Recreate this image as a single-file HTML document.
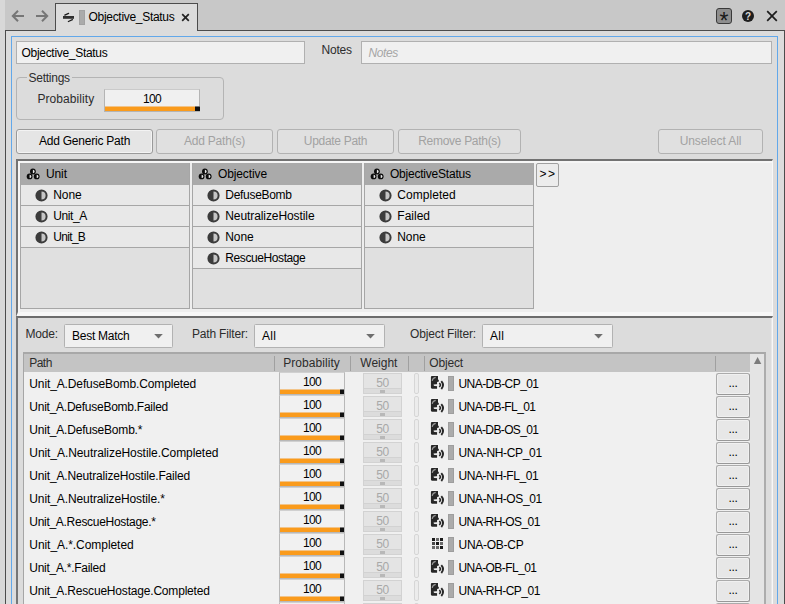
<!DOCTYPE html>
<html><head><meta charset="utf-8"><title>Objective_Status</title>
<style>
*{box-sizing:border-box;margin:0;padding:0}
html,body{width:785px;height:604px;overflow:hidden}
body{position:relative;background:#c8c8c8;font-family:"Liberation Sans",sans-serif;font-size:12px;color:#000;line-height:14px}
.a{position:absolute}
span,em{position:absolute;white-space:nowrap}
#lstrip{left:0;top:0;width:5px;height:604px;background:#d8d8d8}
#panel{left:5px;top:30px;width:780px;height:600px;background:#dcdcdc;border:1px solid #4c4c4c}
#tab{left:55px;top:3px;width:143px;height:28px;background:#dcdcdc;border:1px solid #4c4c4c;border-bottom:none}
#focus{left:11px;top:36px;width:767px;height:600px;border:1px solid #62a8ea}
.field{background:#f0f0f0;border:1px solid #b0b0b0}
.btn{border:1px solid #9a9a9a;border-radius:3px;background:#e5e5e5;height:25px;top:129px;text-align:center;box-shadow:inset 0 0 0 1px #f3f3f3}
.btn.dis{border-color:#b2b2b2;background:#e0e0e0;color:#a2a2a2;box-shadow:none}
.btn span{position:static;line-height:22px}
.lbl{color:#2c2c2c}
#tree{left:16px;top:159px;width:757px;border-right:1px solid #f8f8f8;height:158px;background:#eeeeee;border-top:2px solid #727272;border-left:2px solid #727272;border-bottom:5px solid #f7f7f7;box-shadow:inset 2px 2px 0 #f6f6f6}
.tcol{top:163px;height:146px;background:#e0e0e0;border:1px solid #a6a6a6;border-top:none}
.thead{left:0;top:0;right:0;height:22px;background:#aaaaaa}
.trow{left:0;right:0;height:21px;background:#e8e8e8;border-bottom:1px solid #a6a6a6}
#lower{left:16px;top:316px;width:757px;height:300px;background:#dcdcdc;border-top:2px solid #6c6c6c;border-left:2px solid #767676;border-right:1px solid #f8f8f8;box-shadow:inset -1px 0 0 #e8e8e8}
.combo{background:#f0f0f0;border:1px solid #b2b2b2;border-radius:1.5px;height:24px;top:324px}
.combo svg{position:absolute;right:9px;top:9px}
#tbl{left:23px;top:352px;width:743px;height:260px;background:#f0f0f0;border:1px solid #a6a6a6;border-top:2px solid #a8a8a8;border-right:2px solid #acacac;overflow:hidden}
#thead{left:24px;top:354px;width:726px;height:18px;background:#c4c4c4}
#thead u{position:absolute;top:2px;width:1px;height:15px;background:#a0a0a0}
#rows{position:absolute;left:0;top:352px;width:785px;height:260px;overflow:hidden}
.row{position:absolute;left:0;width:785px;height:23px}
.ps{position:absolute;left:279px;top:0;width:66px;height:23px;background:#f1f1f1;border:1px solid #b8b8b8;border-top-color:#d0d0d0}
.ps span{left:0;right:0;text-align:center;top:2px;letter-spacing:-0.7px}
.ps i{position:absolute;left:0;right:0;bottom:0;height:5px;background:#fa9b1c;border-top:1px solid #f2c489}
.ps b{position:absolute;right:0;bottom:0;width:4px;height:5px;background:#111;border-top:1px solid #777}
.ws{position:absolute;left:363px;top:1px;width:39px;height:21px;background:#e4e4e4;border:1px solid #d2d2d2}
.ws span{left:0;right:0;text-align:center;top:2px;color:#a8a8a8;letter-spacing:-0.4px}
.ws i{position:absolute;left:0;right:0;bottom:0;height:5px;background:#dcdcdc;border-top:1px solid #d2d2d2}
.ws b{position:absolute;left:16px;bottom:0;width:5px;height:3px;background:#b8b8b8}
.chk{position:absolute;left:414px;top:1px;width:5px;height:21px;border:1px solid #d6d6d6;border-radius:2px;background:#ececec}
.ic{position:absolute;left:430px;top:3px}
.col{position:absolute;left:448px;top:4px;width:6px;height:15px;background:#ababab;border:1px solid #9e9e9e}
.dots{position:absolute;left:716px;top:1px;width:34px;height:22px;border:1px solid #a2a2a2;border-color:#ababab #989898 #989898 #ababab;border-radius:2.5px;background:#e7e7e7;text-align:center;box-shadow:inset 0 0 0 1px #f0f0f0}
.dots span{left:0;right:0;top:1.5px;letter-spacing:-0.4px}
#vsb{left:750px;top:354px;width:14px;height:260px;background:#e4e4e4}

</style></head>
<body>
<div class="a" id="lstrip"></div>
<svg class="a" style="left:10px;top:8px" width="42" height="16" viewBox="0 0 42 16"><g fill="none" stroke="#767676" stroke-width="2"><path d="M14 8H3M8 2.8L2.8 8L8 13.2"/><path d="M26 8H37M32 2.8L37.2 8L32 13.2"/></g></svg>
<div class="a" id="panel"></div>
<div class="a" id="tab"></div>
<svg class="a" style="left:62px;top:12px" width="14" height="11" viewBox="0 0 14 11"><path d="M1 5.4H12" stroke="#303030" stroke-width="2.8" fill="none"/><path d="M2.8 3.1L6.6 1.4M10.4 7.7L6.4 9.5" stroke="#1c1c1c" stroke-width="1.3" stroke-linecap="round" fill="none"/></svg>
<div class="a" style="left:79px;top:10px;width:6px;height:15px;background:#ababab;border:1px solid #a2a2a2"></div>
<span style="left:88.5px;top:10px;letter-spacing:-0.3px;">Objective_Status</span>
<svg class="a" style="left:181px;top:13px" width="9" height="9" viewBox="0 0 9 9"><path d="M1.2 1.2L7.8 7.8M7.8 1.2L1.2 7.8" stroke="#222" stroke-width="1.7" fill="none"/></svg>
<div class="a" style="left:716px;top:8px;width:16px;height:16px;background:#8e8e8e;border:1px solid #3a3a3a;border-radius:3px"></div>
<span style="left:716px;width:16px;text-align:center;top:7.5px;font-size:23px;line-height:26px;color:#1a1a1a">*</span>
<div class="a" style="left:742px;top:10px;width:12px;height:12px;border-radius:6px;background:#1e1e1e"></div>
<span style="left:742px;width:12px;text-align:center;top:9.5px;font-size:10px;font-weight:bold;line-height:13px;color:#d8d8d8">?</span>
<svg class="a" style="left:766px;top:10px" width="12" height="12" viewBox="0 0 12 12"><path d="M1.2 1.2L10.8 10.8M10.8 1.2L1.2 10.8" stroke="#1c1c1c" stroke-width="1.7" fill="none"/></svg>
<div class="a" id="focus"></div>
<div class="a field" style="left:16px;top:41px;width:289px;height:23px"></div>
<span style="left:21.5px;top:46px;letter-spacing:-0.3px;">Objective_Status</span>
<span class="lbl" style="left:321.5px;top:43px;letter-spacing:-0.21px;">Notes</span>
<div class="a field" style="left:361px;top:41px;width:411px;height:23px"></div>
<em style="left:368.5px;top:45.5px;color:#a6a6a6;letter-spacing:-0.4px">Notes</em>
<div class="a" style="left:16px;top:77px;width:208px;height:43px;border:1px solid #b4b4b4;border-radius:4px"></div>
<div class="a" style="left:27px;top:72px;width:45px;height:12px;background:#dcdcdc"></div>
<span class="lbl" style="left:28.5px;top:70.5px;letter-spacing:-0.25px;">Settings</span>
<span class="lbl" style="left:37.5px;top:92px;letter-spacing:0.06px;">Probability</span>
<div class="a" style="left:104px;top:89px;width:96px;height:23px;background:#f0f0f0;border:1px solid #b4b4b4;border-top-color:#cacaca"></div>
<span style="left:104px;width:96px;text-align:center;top:92px;letter-spacing:-0.7px">100</span>
<div class="a" style="left:105px;top:106px;width:94px;height:5px;background:#fa9b1c;border-top:1px solid #f2c489"></div>
<div class="a" style="left:195px;top:106px;width:5px;height:5px;background:#111;border-top:1px solid #777"></div>
<div class="a btn" style="left:16px;width:137px"><span style="letter-spacing:-0.22px;">Add Generic Path</span></div>
<div class="a btn dis" style="left:156px;width:117px"><span style="letter-spacing:-0.2px;">Add Path(s)</span></div>
<div class="a btn dis" style="left:277px;width:117px"><span style="letter-spacing:-0.3px;">Update Path</span></div>
<div class="a btn dis" style="left:398px;width:123px"><span style="letter-spacing:-0.3px;">Remove Path(s)</span></div>
<div class="a btn dis" style="left:658px;width:105px"><span style="letter-spacing:-0.09px;">Unselect All</span></div>
<div class="a" id="tree"></div>
<div class="a tcol" style="left:20px;width:170px"><div class="a thead"><svg class="a" style="left:5px;top:5px" width="14" height="12" viewBox="0 0 14 12"><g fill="#0c0c0c"><circle cx="6.9" cy="3.5" r="2.9"/><circle cx="3.6" cy="8.4" r="2.9"/><circle cx="10.7" cy="8.4" r="2.9"/></g><g fill="#e6e6e6"><path d="M6.9 1.8A1.7 1.7 0 0 1 6.9 5.2Z"/><path d="M3.6 6.7A1.7 1.7 0 0 1 3.6 10.1Z"/><path d="M10.7 6.7A1.7 1.7 0 0 1 10.7 10.1Z"/></g></svg><span style="left:25px;top:3.5px;letter-spacing:-0.11px;">Unit</span></div><div class="a trow" style="top:22px"><svg class="a" style="left:13.5px;top:4px" width="13" height="13" viewBox="0 0 13 13"><circle cx="6.5" cy="6.5" r="5.1" fill="#c6c6c6" stroke="#3c3c3c" stroke-width="2"/><path d="M6.5 1.4A5.1 5.1 0 0 0 6.5 11.6Z" fill="#3c3c3c"/></svg><span style="left:32.3px;top:3px;letter-spacing:-0.1px;">None</span></div><div class="a trow" style="top:43px"><svg class="a" style="left:13.5px;top:4px" width="13" height="13" viewBox="0 0 13 13"><circle cx="6.5" cy="6.5" r="5.1" fill="#c6c6c6" stroke="#3c3c3c" stroke-width="2"/><path d="M6.5 1.4A5.1 5.1 0 0 0 6.5 11.6Z" fill="#3c3c3c"/></svg><span style="left:32.3px;top:3px;letter-spacing:-0.43px;">Unit_A</span></div><div class="a trow" style="top:64px"><svg class="a" style="left:13.5px;top:4px" width="13" height="13" viewBox="0 0 13 13"><circle cx="6.5" cy="6.5" r="5.1" fill="#c6c6c6" stroke="#3c3c3c" stroke-width="2"/><path d="M6.5 1.4A5.1 5.1 0 0 0 6.5 11.6Z" fill="#3c3c3c"/></svg><span style="left:32.3px;top:3px;letter-spacing:-0.69px;">Unit_B</span></div></div>
<div class="a tcol" style="left:192px;width:170px"><div class="a thead"><svg class="a" style="left:5px;top:5px" width="14" height="12" viewBox="0 0 14 12"><g fill="#0c0c0c"><circle cx="6.9" cy="3.5" r="2.9"/><circle cx="3.6" cy="8.4" r="2.9"/><circle cx="10.7" cy="8.4" r="2.9"/></g><g fill="#e6e6e6"><path d="M6.9 1.8A1.7 1.7 0 0 1 6.9 5.2Z"/><path d="M3.6 6.7A1.7 1.7 0 0 1 3.6 10.1Z"/><path d="M10.7 6.7A1.7 1.7 0 0 1 10.7 10.1Z"/></g></svg><span style="left:25px;top:3.5px;letter-spacing:-0.12px;">Objective</span></div><div class="a trow" style="top:22px"><svg class="a" style="left:13.5px;top:4px" width="13" height="13" viewBox="0 0 13 13"><circle cx="6.5" cy="6.5" r="5.1" fill="#c6c6c6" stroke="#3c3c3c" stroke-width="2"/><path d="M6.5 1.4A5.1 5.1 0 0 0 6.5 11.6Z" fill="#3c3c3c"/></svg><span style="left:32.3px;top:3px;letter-spacing:-0.3px;">DefuseBomb</span></div><div class="a trow" style="top:43px"><svg class="a" style="left:13.5px;top:4px" width="13" height="13" viewBox="0 0 13 13"><circle cx="6.5" cy="6.5" r="5.1" fill="#c6c6c6" stroke="#3c3c3c" stroke-width="2"/><path d="M6.5 1.4A5.1 5.1 0 0 0 6.5 11.6Z" fill="#3c3c3c"/></svg><span style="left:32.3px;top:3px;letter-spacing:-0.09px;">NeutralizeHostile</span></div><div class="a trow" style="top:64px"><svg class="a" style="left:13.5px;top:4px" width="13" height="13" viewBox="0 0 13 13"><circle cx="6.5" cy="6.5" r="5.1" fill="#c6c6c6" stroke="#3c3c3c" stroke-width="2"/><path d="M6.5 1.4A5.1 5.1 0 0 0 6.5 11.6Z" fill="#3c3c3c"/></svg><span style="left:32.3px;top:3px;letter-spacing:-0.1px;">None</span></div><div class="a trow" style="top:85px"><svg class="a" style="left:13.5px;top:4px" width="13" height="13" viewBox="0 0 13 13"><circle cx="6.5" cy="6.5" r="5.1" fill="#c6c6c6" stroke="#3c3c3c" stroke-width="2"/><path d="M6.5 1.4A5.1 5.1 0 0 0 6.5 11.6Z" fill="#3c3c3c"/></svg><span style="left:32.3px;top:3px;letter-spacing:-0.41px;">RescueHostage</span></div></div>
<div class="a tcol" style="left:364px;width:170px"><div class="a thead"><svg class="a" style="left:5px;top:5px" width="14" height="12" viewBox="0 0 14 12"><g fill="#0c0c0c"><circle cx="6.9" cy="3.5" r="2.9"/><circle cx="3.6" cy="8.4" r="2.9"/><circle cx="10.7" cy="8.4" r="2.9"/></g><g fill="#e6e6e6"><path d="M6.9 1.8A1.7 1.7 0 0 1 6.9 5.2Z"/><path d="M3.6 6.7A1.7 1.7 0 0 1 3.6 10.1Z"/><path d="M10.7 6.7A1.7 1.7 0 0 1 10.7 10.1Z"/></g></svg><span style="left:25px;top:3.5px;letter-spacing:-0.22px;">ObjectiveStatus</span></div><div class="a trow" style="top:22px"><svg class="a" style="left:13.5px;top:4px" width="13" height="13" viewBox="0 0 13 13"><circle cx="6.5" cy="6.5" r="5.1" fill="#c6c6c6" stroke="#3c3c3c" stroke-width="2"/><path d="M6.5 1.4A5.1 5.1 0 0 0 6.5 11.6Z" fill="#3c3c3c"/></svg><span style="left:32.3px;top:3px;letter-spacing:0.05px;">Completed</span></div><div class="a trow" style="top:43px"><svg class="a" style="left:13.5px;top:4px" width="13" height="13" viewBox="0 0 13 13"><circle cx="6.5" cy="6.5" r="5.1" fill="#c6c6c6" stroke="#3c3c3c" stroke-width="2"/><path d="M6.5 1.4A5.1 5.1 0 0 0 6.5 11.6Z" fill="#3c3c3c"/></svg><span style="left:32.3px;top:3px;">Failed</span></div><div class="a trow" style="top:64px"><svg class="a" style="left:13.5px;top:4px" width="13" height="13" viewBox="0 0 13 13"><circle cx="6.5" cy="6.5" r="5.1" fill="#c6c6c6" stroke="#3c3c3c" stroke-width="2"/><path d="M6.5 1.4A5.1 5.1 0 0 0 6.5 11.6Z" fill="#3c3c3c"/></svg><span style="left:32.3px;top:3px;letter-spacing:-0.1px;">None</span></div></div>
<div class="a" style="left:536px;top:163px;width:23px;height:24px;border:1px solid #a0a0a0;border-radius:2px;background:#ececec"></div><span style="left:536px;width:23px;text-align:center;top:167px;letter-spacing:1.5px;text-indent:1px">&gt;&gt;</span>
<div class="a" id="lower"></div>
<span class="lbl" style="left:25.5px;top:326.7px;letter-spacing:-0.19px;">Mode:</span><div class="a combo" style="left:64px;width:109px"><span style="left:7px;top:4px;letter-spacing:-0.25px;">Best Match</span><svg width="9" height="5" viewBox="0 0 9 5"><path d="M0.2 0.1H8.8L4.5 4.6Z" fill="#6e6e6e"/></svg></div>
<span class="lbl" style="left:192px;top:326.7px;letter-spacing:-0.18px;">Path Filter:</span><div class="a combo" style="left:254px;width:131px"><span style="left:7px;top:4px;letter-spacing:0.33px;">All</span><svg width="9" height="5" viewBox="0 0 9 5"><path d="M0.2 0.1H8.8L4.5 4.6Z" fill="#6e6e6e"/></svg></div>
<span class="lbl" style="left:410px;top:326.7px;letter-spacing:-0.14px;">Object Filter:</span><div class="a combo" style="left:482px;width:131px"><span style="left:7px;top:4px;letter-spacing:0.33px;">All</span><svg width="9" height="5" viewBox="0 0 9 5"><path d="M0.2 0.1H8.8L4.5 4.6Z" fill="#6e6e6e"/></svg></div>
<div class="a" id="tbl"></div>
<div class="a" id="thead"><u style="left:250px"></u><u style="left:326px"></u><u style="left:384px"></u><u style="left:400px"></u><u style="left:691px"></u><span class="lbl" style="left:5.3px;top:2px;letter-spacing:-0.56px;">Path</span><span class="lbl" style="left:259.2px;top:2px;letter-spacing:0.06px;">Probability</span><span class="lbl" style="left:336.3px;top:2px;">Weight</span><span class="lbl" style="left:405.2px;top:2px;letter-spacing:-0.14px;">Object</span></div>
<div id="rows">
<div class="row" style="top:20px"><span class="path" style="left:29.3px;top:5px;letter-spacing:-0.12px;">Unit_A.DefuseBomb.Completed</span><div class="ps"><span>100</span><i></i><b></b></div><div class="ws"><span>50</span><i></i><b></b></div><div class="chk"></div><svg class="ic" width="16" height="16" viewBox="0 0 16 16"><g fill="none" stroke="#f6f6f6" stroke-width="2.6" stroke-linejoin="round" opacity="0.8"><path d="M2 0.9H8V4.2L8.9 5.6V6.6L7.1 6.9V13.7H2Q0.9 13.7 0.9 12.6V2Q0.9 0.9 2 0.9Z"/><path d="M11.3 6.4Q14.6 10.1 11.3 13.8"/></g><path d="M2 0.9H8V4.2L8.9 5.6V6.6L7.1 6.9V13.7H2Q0.9 13.7 0.9 12.6V2Q0.9 0.9 2 0.9Z" fill="#272727"/><path d="M2.2 5.9Q2.6 3 5.7 2.4" stroke="#9a9a9a" stroke-width="1.1" fill="none"/><path d="M3.6 9.6L8.8 8.9V11.2L4.4 11Q3.2 10.6 3.6 9.6Z" fill="#ececec"/><path d="M9.2 8.1Q11.8 10 9.2 11.9" stroke="#272727" stroke-width="1.6" fill="none"/><path d="M11.3 6.2Q14.8 10.1 11.3 14" stroke="#272727" stroke-width="1.9" fill="none"/></svg><div class="col"></div><span class="obj" style="left:458.5px;top:5px;letter-spacing:-0.56px;">UNA-DB-CP_01</span><div class="dots"><span>...</span></div></div>
<div class="row" style="top:43px"><span class="path" style="left:29.3px;top:5px;letter-spacing:-0.25px;">Unit_A.DefuseBomb.Failed</span><div class="ps"><span>100</span><i></i><b></b></div><div class="ws"><span>50</span><i></i><b></b></div><div class="chk"></div><svg class="ic" width="16" height="16" viewBox="0 0 16 16"><g fill="none" stroke="#f6f6f6" stroke-width="2.6" stroke-linejoin="round" opacity="0.8"><path d="M2 0.9H8V4.2L8.9 5.6V6.6L7.1 6.9V13.7H2Q0.9 13.7 0.9 12.6V2Q0.9 0.9 2 0.9Z"/><path d="M11.3 6.4Q14.6 10.1 11.3 13.8"/></g><path d="M2 0.9H8V4.2L8.9 5.6V6.6L7.1 6.9V13.7H2Q0.9 13.7 0.9 12.6V2Q0.9 0.9 2 0.9Z" fill="#272727"/><path d="M2.2 5.9Q2.6 3 5.7 2.4" stroke="#9a9a9a" stroke-width="1.1" fill="none"/><path d="M3.6 9.6L8.8 8.9V11.2L4.4 11Q3.2 10.6 3.6 9.6Z" fill="#ececec"/><path d="M9.2 8.1Q11.8 10 9.2 11.9" stroke="#272727" stroke-width="1.6" fill="none"/><path d="M11.3 6.2Q14.8 10.1 11.3 14" stroke="#272727" stroke-width="1.9" fill="none"/></svg><div class="col"></div><span class="obj" style="left:458.5px;top:5px;letter-spacing:-0.59px;">UNA-DB-FL_01</span><div class="dots"><span>...</span></div></div>
<div class="row" style="top:66px"><span class="path" style="left:29.3px;top:5px;letter-spacing:-0.2px;">Unit_A.DefuseBomb.*</span><div class="ps"><span>100</span><i></i><b></b></div><div class="ws"><span>50</span><i></i><b></b></div><div class="chk"></div><svg class="ic" width="16" height="16" viewBox="0 0 16 16"><g fill="none" stroke="#f6f6f6" stroke-width="2.6" stroke-linejoin="round" opacity="0.8"><path d="M2 0.9H8V4.2L8.9 5.6V6.6L7.1 6.9V13.7H2Q0.9 13.7 0.9 12.6V2Q0.9 0.9 2 0.9Z"/><path d="M11.3 6.4Q14.6 10.1 11.3 13.8"/></g><path d="M2 0.9H8V4.2L8.9 5.6V6.6L7.1 6.9V13.7H2Q0.9 13.7 0.9 12.6V2Q0.9 0.9 2 0.9Z" fill="#272727"/><path d="M2.2 5.9Q2.6 3 5.7 2.4" stroke="#9a9a9a" stroke-width="1.1" fill="none"/><path d="M3.6 9.6L8.8 8.9V11.2L4.4 11Q3.2 10.6 3.6 9.6Z" fill="#ececec"/><path d="M9.2 8.1Q11.8 10 9.2 11.9" stroke="#272727" stroke-width="1.6" fill="none"/><path d="M11.3 6.2Q14.8 10.1 11.3 14" stroke="#272727" stroke-width="1.9" fill="none"/></svg><div class="col"></div><span class="obj" style="left:458.5px;top:5px;letter-spacing:-0.62px;">UNA-DB-OS_01</span><div class="dots"><span>...</span></div></div>
<div class="row" style="top:89px"><span class="path" style="left:29.3px;top:5px;letter-spacing:-0.07px;">Unit_A.NeutralizeHostile.Completed</span><div class="ps"><span>100</span><i></i><b></b></div><div class="ws"><span>50</span><i></i><b></b></div><div class="chk"></div><svg class="ic" width="16" height="16" viewBox="0 0 16 16"><g fill="none" stroke="#f6f6f6" stroke-width="2.6" stroke-linejoin="round" opacity="0.8"><path d="M2 0.9H8V4.2L8.9 5.6V6.6L7.1 6.9V13.7H2Q0.9 13.7 0.9 12.6V2Q0.9 0.9 2 0.9Z"/><path d="M11.3 6.4Q14.6 10.1 11.3 13.8"/></g><path d="M2 0.9H8V4.2L8.9 5.6V6.6L7.1 6.9V13.7H2Q0.9 13.7 0.9 12.6V2Q0.9 0.9 2 0.9Z" fill="#272727"/><path d="M2.2 5.9Q2.6 3 5.7 2.4" stroke="#9a9a9a" stroke-width="1.1" fill="none"/><path d="M3.6 9.6L8.8 8.9V11.2L4.4 11Q3.2 10.6 3.6 9.6Z" fill="#ececec"/><path d="M9.2 8.1Q11.8 10 9.2 11.9" stroke="#272727" stroke-width="1.6" fill="none"/><path d="M11.3 6.2Q14.8 10.1 11.3 14" stroke="#272727" stroke-width="1.9" fill="none"/></svg><div class="col"></div><span class="obj" style="left:458.5px;top:5px;letter-spacing:-0.34px;">UNA-NH-CP_01</span><div class="dots"><span>...</span></div></div>
<div class="row" style="top:112px"><span class="path" style="left:29.3px;top:5px;letter-spacing:-0.17px;">Unit_A.NeutralizeHostile.Failed</span><div class="ps"><span>100</span><i></i><b></b></div><div class="ws"><span>50</span><i></i><b></b></div><div class="chk"></div><svg class="ic" width="16" height="16" viewBox="0 0 16 16"><g fill="none" stroke="#f6f6f6" stroke-width="2.6" stroke-linejoin="round" opacity="0.8"><path d="M2 0.9H8V4.2L8.9 5.6V6.6L7.1 6.9V13.7H2Q0.9 13.7 0.9 12.6V2Q0.9 0.9 2 0.9Z"/><path d="M11.3 6.4Q14.6 10.1 11.3 13.8"/></g><path d="M2 0.9H8V4.2L8.9 5.6V6.6L7.1 6.9V13.7H2Q0.9 13.7 0.9 12.6V2Q0.9 0.9 2 0.9Z" fill="#272727"/><path d="M2.2 5.9Q2.6 3 5.7 2.4" stroke="#9a9a9a" stroke-width="1.1" fill="none"/><path d="M3.6 9.6L8.8 8.9V11.2L4.4 11Q3.2 10.6 3.6 9.6Z" fill="#ececec"/><path d="M9.2 8.1Q11.8 10 9.2 11.9" stroke="#272727" stroke-width="1.6" fill="none"/><path d="M11.3 6.2Q14.8 10.1 11.3 14" stroke="#272727" stroke-width="1.9" fill="none"/></svg><div class="col"></div><span class="obj" style="left:458.5px;top:5px;letter-spacing:-0.42px;">UNA-NH-FL_01</span><div class="dots"><span>...</span></div></div>
<div class="row" style="top:135px"><span class="path" style="left:29.3px;top:5px;letter-spacing:-0.1px;">Unit_A.NeutralizeHostile.*</span><div class="ps"><span>100</span><i></i><b></b></div><div class="ws"><span>50</span><i></i><b></b></div><div class="chk"></div><svg class="ic" width="16" height="16" viewBox="0 0 16 16"><g fill="none" stroke="#f6f6f6" stroke-width="2.6" stroke-linejoin="round" opacity="0.8"><path d="M2 0.9H8V4.2L8.9 5.6V6.6L7.1 6.9V13.7H2Q0.9 13.7 0.9 12.6V2Q0.9 0.9 2 0.9Z"/><path d="M11.3 6.4Q14.6 10.1 11.3 13.8"/></g><path d="M2 0.9H8V4.2L8.9 5.6V6.6L7.1 6.9V13.7H2Q0.9 13.7 0.9 12.6V2Q0.9 0.9 2 0.9Z" fill="#272727"/><path d="M2.2 5.9Q2.6 3 5.7 2.4" stroke="#9a9a9a" stroke-width="1.1" fill="none"/><path d="M3.6 9.6L8.8 8.9V11.2L4.4 11Q3.2 10.6 3.6 9.6Z" fill="#ececec"/><path d="M9.2 8.1Q11.8 10 9.2 11.9" stroke="#272727" stroke-width="1.6" fill="none"/><path d="M11.3 6.2Q14.8 10.1 11.3 14" stroke="#272727" stroke-width="1.9" fill="none"/></svg><div class="col"></div><span class="obj" style="left:458.5px;top:5px;letter-spacing:-0.4px;">UNA-NH-OS_01</span><div class="dots"><span>...</span></div></div>
<div class="row" style="top:158px"><span class="path" style="left:29.3px;top:5px;letter-spacing:-0.29px;">Unit_A.RescueHostage.*</span><div class="ps"><span>100</span><i></i><b></b></div><div class="ws"><span>50</span><i></i><b></b></div><div class="chk"></div><svg class="ic" width="16" height="16" viewBox="0 0 16 16"><g fill="none" stroke="#f6f6f6" stroke-width="2.6" stroke-linejoin="round" opacity="0.8"><path d="M2 0.9H8V4.2L8.9 5.6V6.6L7.1 6.9V13.7H2Q0.9 13.7 0.9 12.6V2Q0.9 0.9 2 0.9Z"/><path d="M11.3 6.4Q14.6 10.1 11.3 13.8"/></g><path d="M2 0.9H8V4.2L8.9 5.6V6.6L7.1 6.9V13.7H2Q0.9 13.7 0.9 12.6V2Q0.9 0.9 2 0.9Z" fill="#272727"/><path d="M2.2 5.9Q2.6 3 5.7 2.4" stroke="#9a9a9a" stroke-width="1.1" fill="none"/><path d="M3.6 9.6L8.8 8.9V11.2L4.4 11Q3.2 10.6 3.6 9.6Z" fill="#ececec"/><path d="M9.2 8.1Q11.8 10 9.2 11.9" stroke="#272727" stroke-width="1.6" fill="none"/><path d="M11.3 6.2Q14.8 10.1 11.3 14" stroke="#272727" stroke-width="1.9" fill="none"/></svg><div class="col"></div><span class="obj" style="left:458.5px;top:5px;letter-spacing:-0.56px;">UNA-RH-OS_01</span><div class="dots"><span>...</span></div></div>
<div class="row" style="top:181px"><span class="path" style="left:29.3px;top:5px;letter-spacing:-0.06px;">Unit_A.*.Completed</span><div class="ps"><span>100</span><i></i><b></b></div><div class="ws"><span>50</span><i></i><b></b></div><div class="chk"></div><svg class="ic" width="16" height="16" viewBox="0 0 16 16"><rect x="2" y="2" width="3" height="3" fill="#1a1a1a"/><rect x="6" y="2" width="3" height="3" fill="#6a6a6a"/><rect x="10" y="2" width="3" height="3" fill="#1a1a1a"/><rect x="2" y="6" width="3" height="3" fill="#4a4a4a"/><rect x="6" y="6" width="3" height="3" fill="#1a1a1a"/><rect x="10" y="6" width="3" height="3" fill="#6a6a6a"/><rect x="2" y="10" width="3" height="3" fill="#6a6a6a"/><rect x="6" y="10" width="3" height="3" fill="#6a6a6a"/><rect x="10" y="10" width="3" height="3" fill="#1a1a1a"/></svg><div class="col"></div><span class="obj" style="left:458.5px;top:5px;letter-spacing:-0.27px;">UNA-OB-CP</span><div class="dots"><span>...</span></div></div>
<div class="row" style="top:204px"><span class="path" style="left:29.3px;top:5px;letter-spacing:-0.27px;">Unit_A.*.Failed</span><div class="ps"><span>100</span><i></i><b></b></div><div class="ws"><span>50</span><i></i><b></b></div><div class="chk"></div><svg class="ic" width="16" height="16" viewBox="0 0 16 16"><g fill="none" stroke="#f6f6f6" stroke-width="2.6" stroke-linejoin="round" opacity="0.8"><path d="M2 0.9H8V4.2L8.9 5.6V6.6L7.1 6.9V13.7H2Q0.9 13.7 0.9 12.6V2Q0.9 0.9 2 0.9Z"/><path d="M11.3 6.4Q14.6 10.1 11.3 13.8"/></g><path d="M2 0.9H8V4.2L8.9 5.6V6.6L7.1 6.9V13.7H2Q0.9 13.7 0.9 12.6V2Q0.9 0.9 2 0.9Z" fill="#272727"/><path d="M2.2 5.9Q2.6 3 5.7 2.4" stroke="#9a9a9a" stroke-width="1.1" fill="none"/><path d="M3.6 9.6L8.8 8.9V11.2L4.4 11Q3.2 10.6 3.6 9.6Z" fill="#ececec"/><path d="M9.2 8.1Q11.8 10 9.2 11.9" stroke="#272727" stroke-width="1.6" fill="none"/><path d="M11.3 6.2Q14.8 10.1 11.3 14" stroke="#272727" stroke-width="1.9" fill="none"/></svg><div class="col"></div><span class="obj" style="left:458.5px;top:5px;letter-spacing:-0.56px;">UNA-OB-FL_01</span><div class="dots"><span>...</span></div></div>
<div class="row" style="top:227px"><span class="path" style="left:29.3px;top:5px;letter-spacing:-0.19px;">Unit_A.RescueHostage.Completed</span><div class="ps"><span>100</span><i></i><b></b></div><div class="ws"><span>50</span><i></i><b></b></div><div class="chk"></div><svg class="ic" width="16" height="16" viewBox="0 0 16 16"><g fill="none" stroke="#f6f6f6" stroke-width="2.6" stroke-linejoin="round" opacity="0.8"><path d="M2 0.9H8V4.2L8.9 5.6V6.6L7.1 6.9V13.7H2Q0.9 13.7 0.9 12.6V2Q0.9 0.9 2 0.9Z"/><path d="M11.3 6.4Q14.6 10.1 11.3 13.8"/></g><path d="M2 0.9H8V4.2L8.9 5.6V6.6L7.1 6.9V13.7H2Q0.9 13.7 0.9 12.6V2Q0.9 0.9 2 0.9Z" fill="#272727"/><path d="M2.2 5.9Q2.6 3 5.7 2.4" stroke="#9a9a9a" stroke-width="1.1" fill="none"/><path d="M3.6 9.6L8.8 8.9V11.2L4.4 11Q3.2 10.6 3.6 9.6Z" fill="#ececec"/><path d="M9.2 8.1Q11.8 10 9.2 11.9" stroke="#272727" stroke-width="1.6" fill="none"/><path d="M11.3 6.2Q14.8 10.1 11.3 14" stroke="#272727" stroke-width="1.9" fill="none"/></svg><div class="col"></div><span class="obj" style="left:458.5px;top:5px;letter-spacing:-0.5px;">UNA-RH-CP_01</span><div class="dots"><span>...</span></div></div>
<div class="row" style="top:250px"><div class="ps"><span>100</span><i></i><b></b></div><div class="ws"><span>50</span><i></i><b></b></div><div class="chk"></div><div class="dots"><span>...</span></div></div>
</div>
<div class="a" id="vsb"></div>
<svg class="a" style="left:753px;top:356px" width="10" height="9" viewBox="0 0 10 9"><path d="M0.9 7.9L4.6 1L8.3 7.9Z" fill="#7c7c7c"/></svg>
</body></html>
